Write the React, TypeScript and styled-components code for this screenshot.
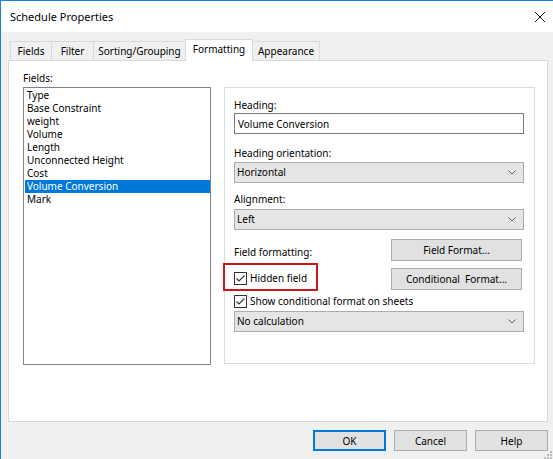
import styled, { createGlobalStyle } from 'styled-components';

const GlobalStyle = createGlobalStyle`
    html, body {
        margin: 0;
        padding: 0;
        background: #f0f0f0;
        overflow: hidden;
    }
    body {
        font-family: 'Noto Sans', 'Open Sans', sans-serif;
        font-size: 10px;
        color: #000;
    }
    * {
        box-sizing: border-box;
    }
`

const fields = ['Type', 'Base Constraint', 'weight', 'Volume', 'Length', 'Unconnected Height', 'Cost', 'Volume Conversion', 'Mark'];

const tabs = [
    { label: 'Fields', width: 42 },
    { label: 'Filter', width: 43 },
    { label: 'Sorting/Grouping', width: 93 },
    { label: 'Formatting', width: 68 },
    { label: 'Appearance', width: 68 },
];

const Chevron = () => (
    <svg width="8" height="5" viewBox="0 0 8 5">
        <polyline points="0.5,0.5 4,4 7.5,0.5" fill="none" stroke="#606060" strokeWidth="1" />
    </svg>
);

const CheckMark = () => (
    <svg width="13" height="13" viewBox="0 0 13 13">
        <rect x="0.5" y="0.5" width="12" height="12" fill="#fff" stroke="#333" />
        <polyline points="2.5,6.5 5,9 10.5,3.5" fill="none" stroke="#333" strokeWidth="1.1" />
    </svg>
);

const App = () => {
    return (
        <Window>
            <GlobalStyle />
            <TitleBar>
                <Title>Schedule Properties</Title>
                <Close>
                    <svg width="10" height="10" viewBox="0 0 10 10">
                        <line x1="0" y1="0" x2="10" y2="10" stroke="#111" strokeWidth="1" />
                        <line x1="10" y1="0" x2="0" y2="10" stroke="#111" strokeWidth="1" />
                    </svg>
                </Close>
            </TitleBar>
            <Body>
                <TabStrip>
                    {tabs.map((t) => (
                        <Tab key={t.label} $width={t.width} $active={t.label === 'Formatting'}>{t.label}</Tab>
                    ))}
                </TabStrip>
                <Panel>
                    <LeftColumn>
                        <Label $top={0}>Fields:</Label>
                        <ListBox>
                            {fields.map((f) => (
                                <ListItem key={f} $selected={f === 'Volume Conversion'}>{f}</ListItem>
                            ))}
                        </ListBox>
                    </LeftColumn>
                    <Group>
                        <Label $top={0}>Heading:</Label>
                        <TextBox readOnly defaultValue="Volume Conversion" />
                        <Label $top={12}>Heading orientation:</Label>
                        <Select $top={2}>Horizontal<Chevron /></Select>
                        <Label $top={9}>Alignment:</Label>
                        <Select $top={3}>Left<Chevron /></Select>
                        <ButtonRow $top={9}>
                            <RowLabel>Field formatting:</RowLabel>
                            <Button $width={131} $height={22}>Field Format...</Button>
                        </ButtonRow>
                        <ButtonRow $top={2}>
                            <Highlight>
                                <CheckRow>
                                    <CheckMark />
                                    <CheckText>Hidden field</CheckText>
                                </CheckRow>
                            </Highlight>
                            <Button $width={131} $height={22} $offset={5}>Conditional  Format...</Button>
                        </ButtonRow>
                        <CheckRow $top={3}>
                            <CheckMark />
                            <CheckText>Show conditional format on sheets</CheckText>
                        </CheckRow>
                        <Select $top={3}>No calculation<Chevron /></Select>
                    </Group>
                </Panel>
                <Footer>
                    <Button $width={73} $height={21} $primary>OK</Button>
                    <Button $width={73} $height={21}>Cancel</Button>
                    <Button $width={73} $height={21}>Help</Button>
                </Footer>
            </Body>
            <Grip>
                <svg width="8" height="8" viewBox="0 0 8 8">
                    <rect x="6" y="0" width="2" height="2" fill="#bcbcbc" />
                    <rect x="3" y="3" width="2" height="2" fill="#bcbcbc" />
                    <rect x="6" y="3" width="2" height="2" fill="#bcbcbc" />
                    <rect x="0" y="6" width="2" height="2" fill="#bcbcbc" />
                    <rect x="3" y="6" width="2" height="2" fill="#bcbcbc" />
                    <rect x="6" y="6" width="2" height="2" fill="#bcbcbc" />
                </svg>
            </Grip>
        </Window>
    );
}

const Window = styled.div`
    position: relative;
    width: 553px;
    height: 459px;
    background: #f0f0f0;
    border-left: 1px solid #1883d7;
    border-top: 1px solid #1883d7;
    display: flex;
    flex-direction: column;
    overflow: hidden;
`

const TitleBar = styled.div`
    height: 31px;
    background: #fff;
    display: flex;
    align-items: center;
    padding-left: 9px;
`

const Title = styled.div`
    font-size: 11px;
    line-height: 15px;
`

const Close = styled.div`
    margin-left: auto;
    margin-right: 8px;
    width: 10px;
    height: 10px;
    display: flex;
`

const Body = styled.div`
    display: flex;
    flex-direction: column;
    padding: 7px 5px 0 7px;
`

const TabStrip = styled.div`
    display: flex;
    align-items: flex-end;
    height: 21px;
    margin-left: 2px;
`

const Tab = styled.div<{ $width: number, $active?: boolean }>`
    position: relative;
    width: ${({ $width }) => $width}px;
    height: ${({ $active }) => $active ? 22 : 19}px;
    margin-bottom: ${({ $active }) => $active ? -1 : 0}px;
    z-index: ${({ $active }) => $active ? 1 : 0};
    background: ${({ $active }) => $active ? '#fff' : '#f0f0f0'};
    border: 1px solid #d9d9d9;
    border-bottom: none;
    padding-top: 2px;
    line-height: 14px;
    text-align: center;
    white-space: nowrap;
    & + & {
        margin-left: -1px;
    }
`

const Panel = styled.div`
    width: 540px;
    height: 362px;
    background: #fff;
    border: 1px solid #d9d9d9;
    display: flex;
    align-items: flex-start;
    gap: 13px;
    padding: 10px 0 0 14px;
`

const LeftColumn = styled.div`
    display: flex;
    flex-direction: column;
`

const Label = styled.div<{ $top: number }>`
    line-height: 14px;
    margin-top: ${({ $top }) => $top}px;
    margin-bottom: ${({ $top }) => $top === 0 ? 1 : 0}px;
    white-space: nowrap;
`

const ListBox = styled.div`
    width: 188px;
    height: 278px;
    margin-top: 1px;
    border: 1px solid #828282;
    padding: 1px 0 1px 1px;
    background: #fff;
`

const ListItem = styled.div<{ $selected?: boolean }>`
    height: 13px;
    line-height: 13px;
    padding-left: 2px;
    white-space: nowrap;
    background: ${({ $selected }) => $selected ? '#0078d7' : 'transparent'};
    color: ${({ $selected }) => $selected ? '#fff' : '#000'};
`

const Group = styled.div`
    width: 311px;
    height: 277px;
    margin-top: 16px;
    border: 1px solid #dcdcdc;
    padding: 10px 10px 0 9px;
    display: flex;
    flex-direction: column;
`

const TextBox = styled.input`
    height: 21px;
    width: 100%;
    border: 1px solid #7a7a7a;
    padding: 0 3px;
    font: inherit;
    line-height: 19px;
    color: #000;
    background: #fff;
    outline: none;
`

const Select = styled.div<{ $top: number }>`
    height: 21px;
    margin-top: ${({ $top }) => $top}px;
    background: #e5e5e5;
    border: 1px solid #acacac;
    display: flex;
    align-items: center;
    justify-content: space-between;
    padding: 0 7px 0 2px;
    line-height: 19px;
`

const ButtonRow = styled.div<{ $top: number }>`
    display: flex;
    justify-content: space-between;
    align-items: flex-start;
    margin-top: ${({ $top }) => $top}px;
    padding-right: 2px;
`

const RowLabel = styled.div`
    padding-top: 6px;
    line-height: 14px;
`

const Button = styled.div<{ $width: number, $height: number, $primary?: boolean, $offset?: number }>`
    width: ${({ $width }) => $width}px;
    height: ${({ $height }) => $height}px;
    margin-top: ${({ $offset }) => $offset || 0}px;
    background: #e1e1e1;
    border: ${({ $primary }) => $primary ? '2px solid #0078d7' : '1px solid #adadad'};
    display: flex;
    align-items: center;
    justify-content: center;
    white-space: pre;
    line-height: 14px;
`

const Highlight = styled.div`
    width: 95px;
    height: 28px;
    margin-left: -11px;
    border: 2px solid #c8161d;
    padding: 6px 0 0 9px;
`

const CheckRow = styled.div<{ $top?: number }>`
    display: flex;
    align-items: flex-start;
    margin-top: ${({ $top }) => $top || 0}px;
    & > svg {
        margin-top: 1px;
        flex: none;
    }
`

const CheckText = styled.span`
    line-height: 14px;
    margin-left: 3px;
    white-space: nowrap;
`

const Footer = styled.div`
    display: flex;
    justify-content: flex-end;
    gap: 8px;
    margin-top: 8px;
`

const Grip = styled.div`
    position: absolute;
    right: 1px;
    bottom: 0;
    width: 8px;
    height: 8px;
    display: flex;
`

export default App;
